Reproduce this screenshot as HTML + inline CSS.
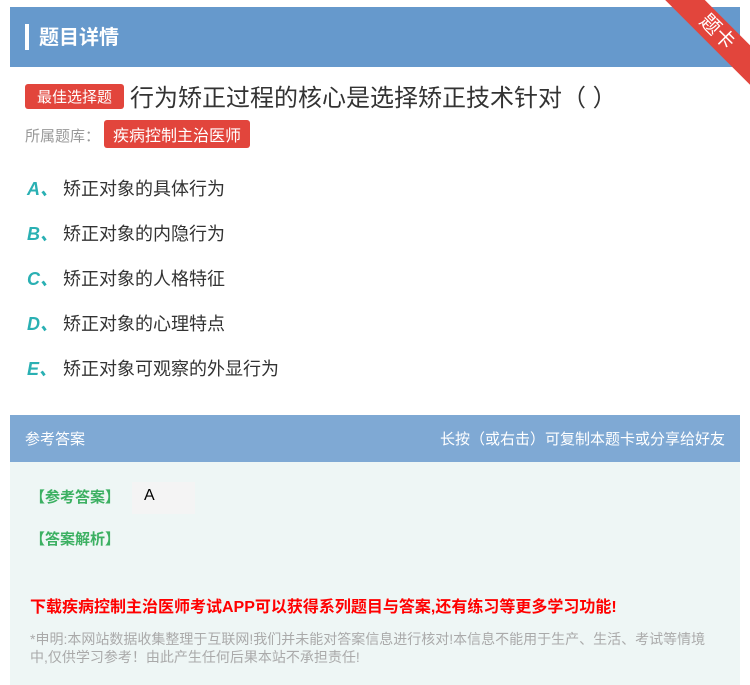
<!DOCTYPE html>
<html><head><meta charset="utf-8"><style>
body{margin:0;width:750px;height:685px;background:#fff;font-family:"Liberation Sans","Noto Sans CJK SC",sans-serif;position:relative;overflow:hidden}
.hd{position:absolute;left:10px;top:7px;width:730px;height:60px;background:#6699cc}
.hd .bar{position:absolute;left:15px;top:17px;width:4px;height:26px;background:#fff}
.hd .t{position:absolute;left:29px;top:14px;color:#fff;font-size:20px;font-weight:bold}
.rib{position:absolute;right:-42px;top:18px;width:150px;height:28px;background:#e2453c;transform:rotate(45deg);color:#fff;text-align:center;font-size:20px;line-height:28px;transform-origin:center}
.tag{display:inline-block;background:#e2453c;color:#fff;border-radius:3px}
.q{position:absolute;left:25px;top:78px;font-size:24px;color:#333}
.q .tag{font-size:15px;padding:2px 12px;vertical-align:4px;margin-right:6px}
.lib{position:absolute;left:25px;top:120px;font-size:15px;color:#999}
.lib .tag{font-size:16px;padding:2px 9px;color:#fff;margin-left:4px}
.op{position:absolute;left:27px;font-size:18px;color:#333}
.op b{color:#2ab0b3;font-style:italic;font-size:18px;display:inline-block;width:36px}
.ah{position:absolute;left:10px;top:415px;width:730px;height:47px;background:#7fa9d4;color:#fff;font-size:15px}
.ab{position:absolute;left:10px;top:462px;width:730px;height:223px;background:#eef6f5}
.g{color:#3cb062;font-size:15px;font-weight:bold;position:absolute;left:20px}
</style></head><body>
<div class="hd"><div class="bar"></div><div class="t">题目详情</div></div>
<div class="rib">题卡</div>
<div class="q"><span class="tag">最佳选择题</span>行为矫正过程的核心是选择矫正技术针对（ ）</div>
<div class="lib">所属题库：<span class="tag">疾病控制主治医师</span></div>
<div class="op" style="top:175px"><b>A、</b>矫正对象的具体行为</div>
<div class="op" style="top:220px"><b>B、</b>矫正对象的内隐行为</div>
<div class="op" style="top:265px"><b>C、</b>矫正对象的人格特征</div>
<div class="op" style="top:310px"><b>D、</b>矫正对象的心理特点</div>
<div class="op" style="top:355px"><b>E、</b>矫正对象可观察的外显行为</div>
<div class="ah"><span style="position:absolute;left:15px;top:13px">参考答案</span><span style="position:absolute;right:15px;top:13px">长按（或右击）可复制本题卡或分享给好友</span></div>
<div class="ab">
<div class="g" style="top:24px">【参考答案】</div>
<div style="position:absolute;left:122px;top:20px;width:63px;height:32px;background:#f4f4f4;font-size:16px;padding-left:12px;box-sizing:border-box;line-height:28px">A</div>
<div class="g" style="top:66px">【答案解析】</div>
<div style="position:absolute;left:20px;top:131px;color:#f00;font-size:16px;font-weight:bold;white-space:nowrap">下载疾病控制主治医师考试APP可以获得系列题目与答案,还有练习等更多学习功能!</div>
<div style="position:absolute;left:20px;top:168px;width:690px;color:#aaa;font-size:14px;line-height:18px">*申明:本网站数据收集整理于互联网!我们并未能对答案信息进行核对!本信息不能用于生产、生活、考试等情境中,仅供学习参考！由此产生任何后果本站不承担责任!</div>
</div>
</body></html>
